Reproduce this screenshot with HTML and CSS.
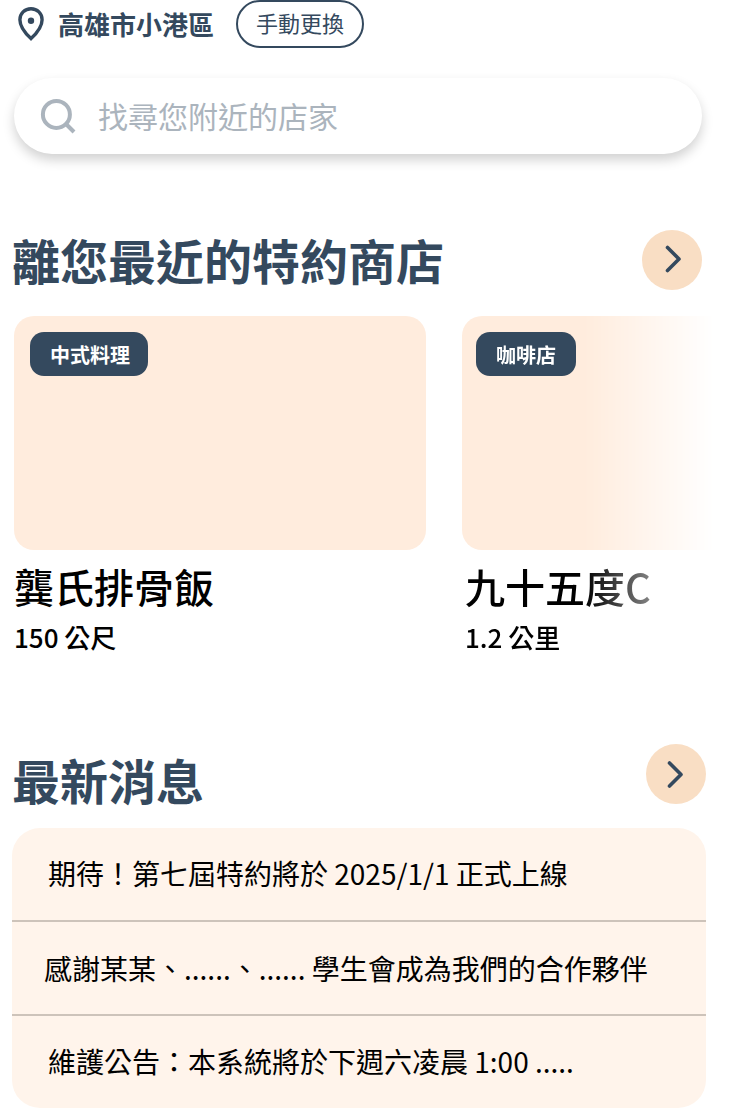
FILE: index.html
```html
<!DOCTYPE html>
<html lang="zh-Hant">
<head>
<meta charset="utf-8">
<title>特約商店</title>
<link rel="stylesheet" href="styles.css">
</head>
<body>
<main class="page">
  <header class="location">
    <svg class="pin" width="28" height="36" viewBox="0 0 28 36"><path d="M14 2.700C7.700 2.700 2.900 7.600 2.900 13.700C2.900 20 8.200 27.200 14 32.600C19.800 27.200 25.100 20 25.100 13.700C25.100 7.600 20.300 2.700 14 2.700Z"/><circle cx="14" cy="14.700" r="3.200"/></svg>
    <span class="place">高雄市小港區</span>
    <button class="change"><span>手動更換</span></button>
  </header>
  <label class="search">
    <svg class="lens" width="36" height="36" viewBox="0 0 36 36"><circle cx="16.400" cy="16.400" r="13.500"/><path d="M26 26L34 34"/></svg>
    <span>找尋您附近的店家</span>
  </label>
  <section class="stores">
    <div class="section-head">
      <h2>離您最近的特約商店</h2>
      <a class="more"><svg width="20" height="32" viewBox="0 0 20 32"><path d="M4.500 3.500L16 15L4.500 26.500"/></svg></a>
    </div>
    <div class="store-list">
      <article class="store">
        <div class="photo"><span class="tag">中式料理</span></div>
        <h3>龔氏排骨飯</h3>
        <p>150 公尺</p>
      </article>
      <article class="store store-next">
        <div class="photo"><span class="tag">咖啡店</span></div>
        <h3>九十五度C</h3>
        <p>1.2 公里</p>
      </article>
    </div>
  </section>
  <section class="news">
    <div class="section-head">
      <h2>最新消息</h2>
      <a class="more"><svg width="20" height="32" viewBox="0 0 20 32"><path d="M4.500 5L16 16.500L4.500 28"/></svg></a>
    </div>
    <ul class="news-list">
      <li>期待！第七屆特約將於 2025/1/1 正式上線</li>
      <li class="wide">感謝某某、......、...... 學生會成為我們的合作夥伴</li>
      <li>維護公告：本系統將於下週六凌晨 1:00 .....</li>
    </ul>
  </section>
</main>
</body>
</html>
```

FILE: styles.css
```css
* { box-sizing: border-box; }
body { margin: 0; background: #fff; color: #000; font-family: "Noto Sans CJK TC", sans-serif; }
h2, h3, p, ul { margin: 0; padding: 0; }
svg { display: block; fill: none; }
.page { width: 750px; height: 1108px; overflow: hidden; }
.location { display: flex; align-items: center; height: 48px; padding-left: 17px; color: #34495e; }
.pin { stroke: #34495e; stroke-width: 3.4; }
.pin circle { fill: #34495e; stroke: none; }
.place { margin-left: 13px; font-size: 26px; line-height: 47px; height: 48px; font-weight: 700; }
.change { width: 128px; height: 48px; margin-left: 22px; padding: 0 0 4px; border: 2px solid #34495e; border-radius: 24px; background: #fff; color: #34495e; font: 400 22px/40px "Noto Sans CJK TC", sans-serif; }
.change span { display: block; height: 40px; }
.search { display: flex; align-items: center; width: 688px; height: 76px; margin: 30px 0 0 14px; padding-left: 26px; border-radius: 38px; background: #fff; box-shadow: 0 6px 12px rgba(0, 0, 0, .18); color: #abb4bd; font-size: 30px; font-weight: 400; line-height: 74px; }
.search span { height: 76px; margin-left: 22px; }
.lens { stroke: #abb4bd; stroke-width: 4; }
.section-head { display: flex; justify-content: space-between; align-items: flex-start; height: 60px; }
.section-head h2 { color: #34495e; font-size: 48px; line-height: 59px; font-weight: 700; }
.more { display: flex; align-items: center; justify-content: center; width: 60px; height: 60px; border-radius: 50%; background: #f9dec4; }
.more svg { margin-left: 2px; stroke: #34495e; stroke-width: 3.6; stroke-linecap: round; stroke-linejoin: round; }
.stores { margin-top: 76px; }
.stores .section-head { width: 690px; margin-left: 12px; }
.store-list { display: flex; gap: 36px; width: 736px; height: 346px; margin: 26px 0 0 14px; overflow: hidden; }
.store { flex: 0 0 412px; }
.photo { height: 234px; padding: 16px; border-radius: 20px; background: #ffecdd; }
.tag { display: inline-block; height: 44px; padding: 0 18px 0 20px; border-radius: 14px; background: #34495e; color: #fff; font-size: 20px; line-height: 45px; font-weight: 700; vertical-align: top; }
.store h3 { height: 60px; font-size: 40px; line-height: 60px; font-weight: 500; margin-top: 6px; }
.store p { margin-top: 1px; font-size: 26px; line-height: 40px; font-weight: 500; }
.store-next { -webkit-mask-image: linear-gradient(to right, #000 122px, transparent 252px); mask-image: linear-gradient(to right, #000 122px, transparent 252px); }
.store-next .photo { padding-left: 14px; }
.store-next .tag { padding-right: 20px; }
.store-next h3, .store-next p { padding-left: 3px; }
.news { margin-top: 82px; }
.news .section-head { width: 694px; margin-left: 12px; }
.news .section-head h2 { line-height: 70px; }
.news .more svg { margin-left: -2px; }
.news-list { width: 694px; height: 280px; margin: 24px 0 0 12px; border-radius: 28px; background: #fff4eb; list-style: none; }
.news-list li { height: 94px; padding-left: 36px; border-bottom: 2px solid #cdc3ba; font-size: 28px; line-height: 90px; white-space: pre; }
.news-list .wide { padding-left: 32px; line-height: 93px; }
.news-list li:last-child { border: 0; }
```
